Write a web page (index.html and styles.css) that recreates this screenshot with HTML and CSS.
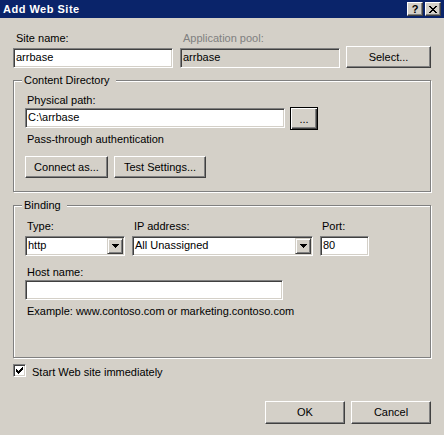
FILE: index.html
```html
<!DOCTYPE html>
<html lang="en">
<head>
  <meta charset="UTF-8">
  <title>Add Web Site</title>
  <link rel="stylesheet" href="styles.css">
</head>
<body>
  <div class="dialog">
    <div class="titlebar">
      <span class="title">Add Web Site</span>
      <div class="title-buttons">
        <span class="tbtn help">?</span>
        <span class="tbtn close">
          <svg width="8" height="7" viewBox="0 0 8 7" shape-rendering="crispEdges">
            <path d="M0 0h2v1H0zM6 0h2v1H6zM1 1h2v1H1zM5 1h2v1H5zM2 2h4v1H2zM3 3h2v1H3zM2 4h4v1H2zM1 5h2v1H1zM5 5h2v1H5zM0 6h2v1H0zM6 6h2v1H6z" fill="#000"/>
          </svg>
        </span>
      </div>
    </div>

    <div class="content">
      <div class="top-row">
        <div class="field">
          <div class="label">Site name:</div>
          <div class="edit site-edit">arrbase</div>
        </div>
        <div class="field">
          <div class="label disabled">Application pool:</div>
          <div class="edit readonly site-edit">arrbase</div>
        </div>
        <div class="btn select-btn">Select...</div>
      </div>

      <div class="group dir-group">
        <div class="group-title">Content Directory</div>
        <div class="label path-label">Physical path:</div>
        <div class="path-row">
          <div class="edit path-edit">C:\arrbase</div>
          <div class="btn dots-btn">...</div>
        </div>
        <div class="auth-text">Pass-through authentication</div>
        <div class="btn-row">
          <div class="btn connect-btn">Connect as...</div>
          <div class="btn test-btn">Test Settings...</div>
        </div>
      </div>

      <div class="group binding-group">
        <div class="group-title">Binding</div>
        <div class="binding-row">
          <div class="field">
            <div class="label">Type:</div>
            <div class="combo type-combo">
              <span class="combo-text">http</span>
              <span class="combo-arrow">
                <svg width="7" height="4" viewBox="0 0 7 4" shape-rendering="crispEdges"><path d="M0 0h7v1H0zM1 1h5v1H1zM2 2h3v1H2zM3 3h1v1H3z" fill="#000"/></svg>
              </span>
            </div>
          </div>
          <div class="field">
            <div class="label">IP address:</div>
            <div class="combo ip-combo">
              <span class="combo-text">All Unassigned</span>
              <span class="combo-arrow">
                <svg width="7" height="4" viewBox="0 0 7 4" shape-rendering="crispEdges"><path d="M0 0h7v1H0zM1 1h5v1H1zM2 2h3v1H2zM3 3h1v1H3z" fill="#000"/></svg>
              </span>
            </div>
          </div>
          <div class="field">
            <div class="label">Port:</div>
            <div class="edit port-edit">80</div>
          </div>
        </div>
        <div class="label host-label">Host name:</div>
        <div class="edit host-edit"></div>
        <div class="example">Example: www.contoso.com or marketing.contoso.com</div>
      </div>

      <div class="check-row">
        <span class="checkbox">
          <svg width="7" height="7" viewBox="0 0 7 7" shape-rendering="crispEdges">
            <path d="M0 2h1v3H0zM1 3h1v3H1zM2 4h1v3H2zM3 3h1v3H3zM4 2h1v3H4zM5 1h1v3H5zM6 0h1v3H6z" fill="#000"/>
          </svg>
        </span>
        <span class="check-label">Start Web site immediately</span>
      </div>

      <div class="footer">
        <div class="btn dialog-btn">OK</div>
        <div class="btn dialog-btn">Cancel</div>
      </div>
    </div>
  </div>
</body>
</html>
```

FILE: styles.css
```css
body {
  margin: 0;
  background-color: #d4d0c8;
  font-family: "Liberation Sans", Arial, sans-serif;
  font-size: 11px;
  line-height: 13px;
  color: #000;
}

.dialog {
  width: 444px;
  height: 435px;
}

/* title bar */
.titlebar {
  height: 18px;
  background-color: #0a246a;
  display: flex;
  align-items: center;
  justify-content: space-between;
  padding: 0 3px;
}

.title {
  color: #fff;
  font-weight: bold;
  letter-spacing: 0.5px;
}

.title-buttons {
  display: flex;
  gap: 2px;
}

.tbtn {
  box-sizing: border-box;
  width: 16px;
  height: 14px;
  background-color: #d4d0c8;
  border: 1px solid;
  border-color: #fff #404040 #404040 #fff;
  box-shadow: inset -1px -1px #808080;
  display: flex;
  align-items: center;
  justify-content: center;
}

.tbtn.help {
  font-weight: bold;
  font-size: 11px;
  line-height: 11px;
}

/* body */
.content {
  padding: 14px 13px 0 13px;
}

.label {
  padding-left: 2px;
  white-space: nowrap;
}

.label.disabled {
  color: #808080;
}

.top-row {
  display: flex;
  gap: 7px;
}

.top-row .field .label {
  padding-left: 3px;
  margin-bottom: 3px;
}

.edit {
  box-sizing: border-box;
  height: 20px;
  border: 1px solid;
  border-color: #808080 #fff #fff #808080;
  box-shadow: inset 1px 1px #404040, inset -1px -1px #d4d0c8;
  padding: 2px 3px 3px 2px;
  background-color: #fff;
  white-space: nowrap;
  overflow: hidden;
}

.edit.readonly {
  background-color: #d4d0c8;
}

.site-edit {
  width: 160px;
}

.btn {
  box-sizing: border-box;
  height: 22px;
  background-color: #d4d0c8;
  border: 1px solid;
  border-color: #fff #404040 #404040 #fff;
  box-shadow: inset -1px -1px #808080;
  display: flex;
  align-items: center;
  justify-content: center;
  white-space: nowrap;
}

.select-btn {
  width: 85px;
  margin-left: -1px;
  align-self: flex-end;
}

/* group boxes */
.group {
  box-sizing: border-box;
  width: 418px;
  border: 1px solid #808080;
  box-shadow: inset 1px 1px #fff, 1px 1px #fff;
  padding: 0 11px;
}

.group-title {
  width: fit-content;
  margin: -7px 0 0 -3px;
  padding: 0 6px 0 2px;
  background-color: #d4d0c8;
}

.dir-group {
  margin-top: 12px;
  padding-bottom: 13px;
}

.path-label {
  margin-top: 7px;
}

.path-row {
  display: flex;
  align-items: flex-start;
  gap: 5px;
}

.path-edit {
  width: 260px;
  margin-top: 1px;
}

.dots-btn {
  width: 28px;
  height: 23px;
  border: 1px solid #000;
  box-shadow: inset 1px 1px #fff, inset -1px -1px #404040, inset -2px -2px #808080;
  padding-top: 2px;
}

.auth-text {
  margin-top: 3px;
  padding-left: 2px;
}

.btn-row {
  display: flex;
  gap: 6px;
  margin-top: 10px;
}

.connect-btn {
  width: 83px;
}

.test-btn {
  width: 92px;
}

.binding-group {
  margin-top: 13px;
  padding-bottom: 39px;
}

.binding-row {
  display: flex;
  gap: 7px;
  margin-top: 8px;
}

.binding-row .label {
  margin-bottom: 3px;
}

.combo {
  box-sizing: border-box;
  height: 20px;
  display: flex;
  border: 1px solid;
  border-color: #808080 #fff #fff #808080;
  box-shadow: inset 1px 1px #404040, inset -1px -1px #d4d0c8;
  padding: 1px;
  background-color: #fff;
}

.combo-text {
  flex: 1;
  padding: 1px 0 0 1px;
  white-space: nowrap;
}

.combo-arrow {
  box-sizing: border-box;
  width: 16px;
  height: 16px;
  background-color: #d4d0c8;
  border: 1px solid;
  border-color: #d4d0c8 #404040 #404040 #d4d0c8;
  box-shadow: inset 1px 1px #fff, inset -1px -1px #808080;
  display: flex;
  align-items: center;
  justify-content: center;
}

.type-combo {
  width: 100px;
}

.ip-combo {
  width: 181px;
}

.port-edit {
  width: 49px;
}

.host-label {
  margin-top: 10px;
  margin-bottom: 1px;
}

.host-edit {
  width: 258px;
}

.example {
  margin-top: 5px;
  padding-left: 2px;
}

/* checkbox + footer */
.check-row {
  display: flex;
  align-items: flex-start;
  margin-top: 6px;
}

.checkbox {
  box-sizing: border-box;
  width: 13px;
  height: 13px;
  border: 1px solid;
  border-color: #808080 #fff #fff #808080;
  box-shadow: inset 1px 1px #404040, inset -1px -1px #d4d0c8;
  background-color: #fff;
  display: flex;
  align-items: center;
  justify-content: center;
}

.check-label {
  margin: 2px 0 0 6px;
}

.footer {
  display: flex;
  justify-content: flex-end;
  gap: 6px;
  margin-top: 22px;
}

.dialog-btn {
  width: 80px;
  height: 23px;
}
```
